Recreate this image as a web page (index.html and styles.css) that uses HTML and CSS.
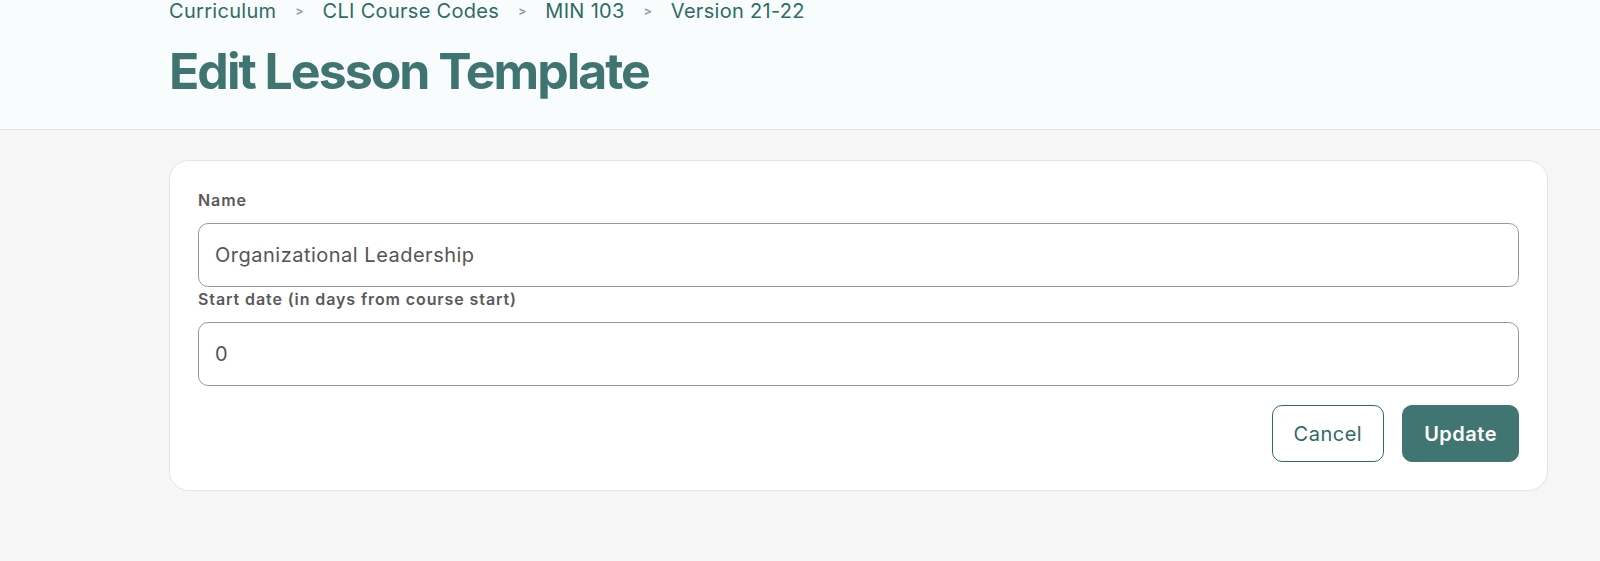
FILE: index.html
```html
<!DOCTYPE html>
<html lang="en">
<head>
	<meta charset="UTF-8">
	<title>Edit Lesson Template</title>
	<link rel="stylesheet" href="styles.css">
</head>
<body>
	<div class="pageHead">
		<ul class="crumbs">
			<li><a href="">Curriculum</a></li>
			<li class="sep">&gt;</li>
			<li><a href="">CLI Course Codes</a></li>
			<li class="sep">&gt;</li>
			<li><a href="">MIN 103</a></li>
			<li class="sep">&gt;</li>
			<li><a href="">Version 21-22</a></li>
		</ul>
		<h1 class="title">Edit Lesson Template</h1>
	</div>
	<div class="main">
		<form class="card">
			<label class="label" for="name">Name</label>
			<input class="field" id="name" type="text" value="Organizational Leadership">
			<label class="label" for="start">Start date (in days from course start)</label>
			<input class="field" id="start" type="text" value="0">
			<div class="actions">
				<button type="button" class="btn btnGhost">Cancel</button>
				<button type="button" class="btn btnMain">Update</button>
			</div>
		</form>
	</div>
</body>
</html>
```
FILE: styles.css
```css
*{
	margin: 0;
	padding: 0;
	box-sizing: border-box;
}
body{
	font-family: Inter, "Noto Sans", sans-serif;
	background-color: #f5f6f5;
	color: #555;
}
.pageHead{
	height: 130px;
	padding-left: 169px;
	background-color: #f8fcfd;
	border-bottom: 1px solid #e2e5e5;
}
.crumbs{
	display: flex;
	align-items: center;
	gap: 19px;
	list-style: none;
	height: 22px;
	font-size: 20px;
	line-height: 22px;
	letter-spacing: 0.3px;
}
.crumbs a{
	color: #2f6b66;
	text-decoration: none;
}
.crumbs .sep{
	color: #999;
	font-size: 12px;
	font-weight: 700;
	letter-spacing: 0;
}
.title{
	margin-top: 21px;
	font-size: 50px;
	line-height: 56px;
	font-weight: 700;
	letter-spacing: -2px;
	color: #3f7470;
}
.main{
	padding: 30px 52px 0 169px;
}
.card{
	display: flex;
	flex-direction: column;
	padding: 28px;
	background-color: #fff;
	border: 1px solid #e3e5e5;
	border-radius: 20px;
}
.label{
	font-size: 16px;
	line-height: 22px;
	font-weight: 600;
	letter-spacing: 0.9px;
	color: #5a5a5a;
	margin-bottom: 12px;
}
.field{
	height: 64px;
	padding: 0 16px;
	font-family: inherit;
	font-size: 20px;
	letter-spacing: 0.5px;
	color: #555;
	border: 1px solid #999;
	border-radius: 10px;
	outline: none;
	margin-bottom: 1px;
}
.actions{
	display: flex;
	justify-content: flex-end;
	gap: 18px;
	margin-top: 18px;
}
.btn{
	height: 57px;
	padding: 0 21px;
	font-family: inherit;
	font-size: 20px;
	letter-spacing: 0.5px;
	border-radius: 10px;
	cursor: pointer;
}
.btnGhost{
	background-color: #fff;
	color: #2f6b66;
	border: 1px solid #2f6b66;
}
.btnMain{
	background-color: #417571;
	color: #fff;
	font-weight: 600;
	border: 1px solid #417571;
}
```
